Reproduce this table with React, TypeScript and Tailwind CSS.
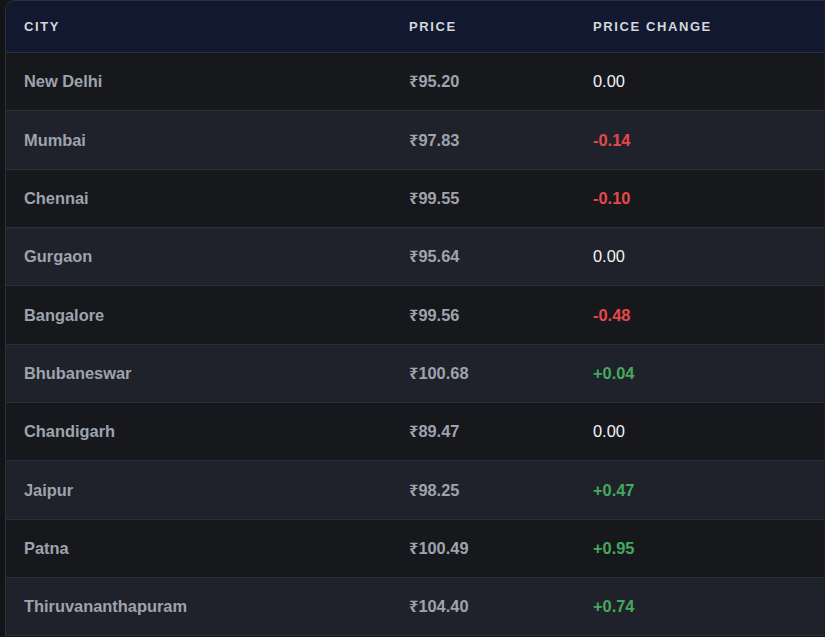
import React from "react";

type Row = { city: string; price: string; change: string };

const rows: Row[] = [
  { city: "New Delhi", price: "₹95.20", change: "0.00" },
  { city: "Mumbai", price: "₹97.83", change: "-0.14" },
  { city: "Chennai", price: "₹99.55", change: "-0.10" },
  { city: "Gurgaon", price: "₹95.64", change: "0.00" },
  { city: "Bangalore", price: "₹99.56", change: "-0.48" },
  { city: "Bhubaneswar", price: "₹100.68", change: "+0.04" },
  { city: "Chandigarh", price: "₹89.47", change: "0.00" },
  { city: "Jaipur", price: "₹98.25", change: "+0.47" },
  { city: "Patna", price: "₹100.49", change: "+0.95" },
  { city: "Thiruvananthapuram", price: "₹104.40", change: "+0.74" },
];

function changeClass(c: string) {
  if (c.startsWith("-")) return "text-[#e5484d] font-bold";
  if (c.startsWith("+")) return "text-[#46a85f] font-bold";
  return "text-[#f3f4f6] font-normal";
}

export default function App() {
  return (
    <div
      className="w-[825px] h-[637px] overflow-hidden bg-[#121418] pl-[5px]"
      style={{ fontFamily: '"Liberation Sans", "Noto Sans", "DejaVu Sans", sans-serif' }}
    >
      <div className="w-[820px] rounded-tl-[10px] border-l border-t border-r border-l-[#2c3038] border-t-[#2c3038] border-r-[#1a1d22] overflow-hidden">
        <div className="flex h-[52px] items-center bg-[#121830] border-b border-[#26313a] text-[13px] font-bold uppercase tracking-[1.6px] text-[#d4d7dc]">
          <div className="w-[385px] pl-[18px]">City</div>
          <div className="w-[184px] pl-[18px]">Price</div>
          <div className="flex-1 pl-[18px]">Price Change</div>
        </div>
        {rows.map((r, i) => (
          <div
            key={r.city}
            className={`flex h-[58.35px] items-center border-b border-[#26313a] text-[16.4px] ${
              i % 2 === 0 ? "bg-[#16181c]" : "bg-[#1f222a]"
            }`}
          >
            <div className="w-[385px] pl-[18px] font-bold text-[#9ea3ad]">{r.city}</div>
            <div className="w-[184px] pl-[18px] font-bold text-[#9ea3ad]">{r.price}</div>
            <div className={`flex-1 pl-[18px] ${changeClass(r.change)}`}>{r.change}</div>
          </div>
        ))}
      </div>
    </div>
  );
}
